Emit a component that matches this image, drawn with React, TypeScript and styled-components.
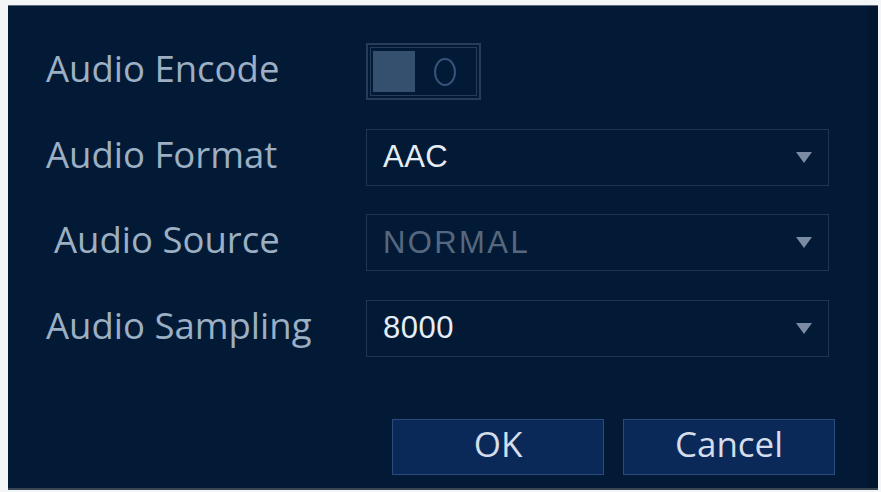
import * as React from 'react'
import styled, { createGlobalStyle } from 'styled-components'

const GlobalStyle = createGlobalStyle`
  html, body {
    margin: 0;
    padding: 0;
    background: #f4f5f7;
  }
`

const Panel = styled.div`
  box-sizing: border-box;
  margin: 5px 3px 0 8px;
  height: 485px;
  padding: 37px 43px 0 38px;
  background: #031a36;
  border-top: 1px solid #5d6b7a;
  border-bottom: 2px solid #3a4654;
  box-shadow: inset -10px 0 0 #02172f;
  display: flex;
  flex-direction: column;
`

const Form = styled.div`
  display: grid;
  grid-template-columns: 320px 463px;
  grid-auto-rows: 57px;
  row-gap: 28.5px;
`

const Label = styled.div<{ $indent?: number }>`
  display: flex;
  align-items: center;
  padding-left: ${(p) => p.$indent || 0}px;
  padding-bottom: 7px;
  font-family: 'Open Sans', 'DejaVu Sans', sans-serif;
  font-size: 36.5px;
  color: #9cafc3;
  white-space: nowrap;
`

const Field = styled.div`
  display: flex;
  align-items: center;
`

/* toggle */
const ToggleOuter = styled.div`
  box-sizing: border-box;
  width: 115px;
  height: 57px;
  border: 2px solid #263d5a;
  padding: 2px;
`

const ToggleInner = styled.div`
  box-sizing: border-box;
  height: 100%;
  border: 1px solid #263d5a;
  padding: 3px 2px;
  display: flex;
  align-items: stretch;
`

const Knob = styled.div`
  width: 42px;
  background: #35506f;
`

const OffMark = styled.div`
  flex: 1;
  display: flex;
  align-items: center;
  justify-content: center;
`

/* select */
const SelectBox = styled.div`
  box-sizing: border-box;
  width: 463px;
  height: 57px;
  border: 1.5px solid #1f3550;
  padding: 0 16px 0 16px;
  display: flex;
  align-items: center;
  justify-content: space-between;
`

const Value = styled.span<{ $disabled?: boolean }>`
  font-family: 'Liberation Sans', Arial, sans-serif;
  font-size: 31px;
  letter-spacing: ${(p) => (p.$disabled ? '2.4px' : '0.5px')};
  color: ${(p) => (p.$disabled ? '#56687e' : '#e6edf5')};
`

const Footer = styled.div`
  margin-top: 62px;
  display: flex;
  justify-content: flex-end;
  gap: 19px;
`

const Button = styled.button`
  box-sizing: border-box;
  width: 212px;
  height: 56px;
  background: #0a2959;
  border: 1.5px solid #2a4a7c;
  color: #d4dde9;
  font-family: 'Open Sans', 'DejaVu Sans', sans-serif;
  font-size: 35px;
  padding: 0 0 8px;
  cursor: pointer;
`

const Arrow = () => (
  <svg width="16" height="11" viewBox="0 0 16 11">
    <path d="M0 0 H16 L8 11 Z" fill="#7a8ba3" />
  </svg>
)

const Select: React.FC<{ value: string; disabled?: boolean }> = ({ value, disabled }) => (
  <SelectBox>
    <Value $disabled={disabled}>{value}</Value>
    <Arrow />
  </SelectBox>
)

export default function App() {
  return (
    <>
      <GlobalStyle />
      <Panel>
        <Form>
          <Label>Audio Encode</Label>
          <Field>
            <ToggleOuter>
              <ToggleInner>
                <Knob />
                <OffMark>
                  <svg width="24" height="30" viewBox="0 0 24 30">
                    <ellipse cx="12" cy="15" rx="10" ry="13" fill="none" stroke="#38527a" strokeWidth="2" />
                  </svg>
                </OffMark>
              </ToggleInner>
            </ToggleOuter>
          </Field>

          <Label>Audio Format</Label>
          <Field>
            <Select value="AAC" />
          </Field>

          <Label $indent={8}>Audio Source</Label>
          <Field>
            <Select value="NORMAL" disabled />
          </Field>

          <Label>Audio Sampling</Label>
          <Field>
            <Select value="8000" />
          </Field>
        </Form>
        <Footer>
          <Button>OK</Button>
          <Button>Cancel</Button>
        </Footer>
      </Panel>
    </>
  )
}
